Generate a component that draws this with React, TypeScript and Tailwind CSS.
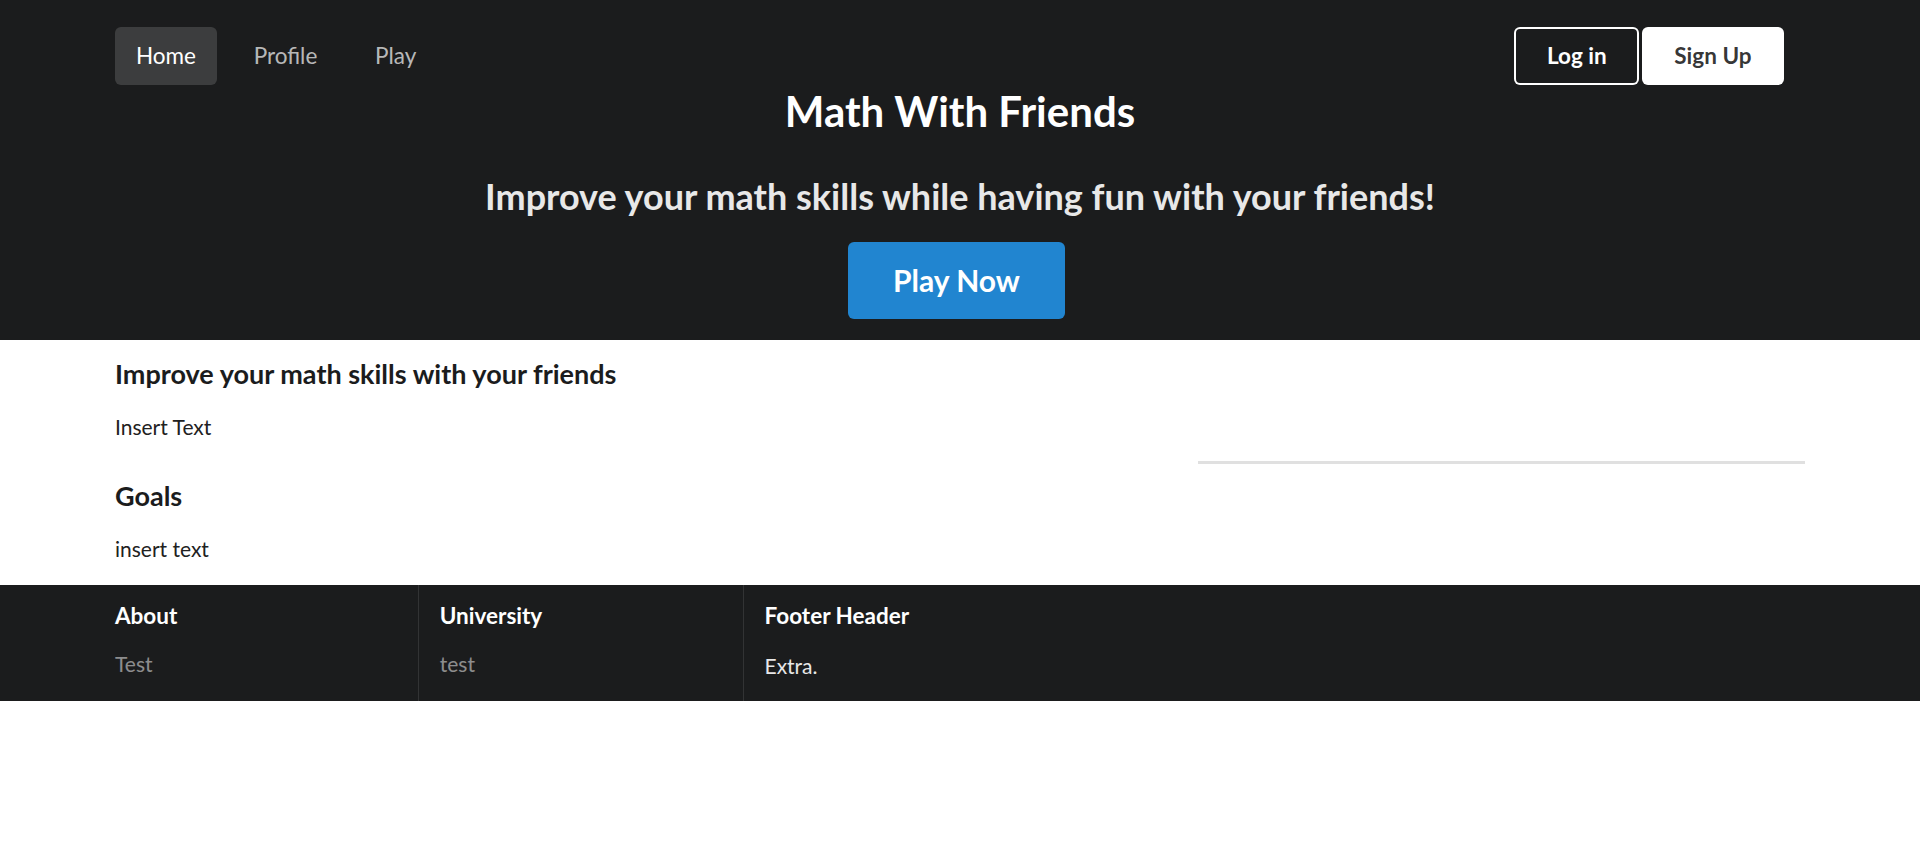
export default function App() {
  const font = "font-['Lato','Helvetica_Neue',Arial,sans-serif]";
  return (
    <div className={`min-h-[849px] bg-white ${font} text-[21px] text-[#212121]`}>
      <header className="bg-[#1b1c1d] pt-[27px] pb-[20.7px] text-center">
        <div className="mx-auto flex w-[1690px] items-start">
          <nav className="flex items-start">
            <a className="rounded-[6px] bg-white/15 px-[20.9px] py-[17.7px] text-[22.5px] leading-none text-white">
              Home
            </a>
            <a className="ml-[16px] rounded-[6px] px-[20.9px] py-[17.7px] text-[22.5px] leading-none text-white/70">
              Profile
            </a>
            <a className="ml-[16px] rounded-[6px] px-[20.9px] py-[17.7px] text-[22.5px] leading-none text-white/70">
              Play
            </a>
          </nav>
          <div className="ml-auto flex items-start pr-[21px]">
            <a className="rounded-[6px] bg-[#1b1c1d] px-[32.5px] py-[17.5px] text-[22.5px] leading-none font-bold text-white shadow-[inset_0_0_0_2px_#ffffff]">
              Log in
            </a>
            <a className="ml-[2.7px] rounded-[6px] bg-white px-[32.5px] py-[17.5px] text-[22.5px] leading-none font-bold text-black/80">
              Sign Up
            </a>
          </div>
        </div>
        <h1 className="h-[52px] text-[42px] leading-[52px] font-bold text-white">Math With Friends</h1>
        <h2 className="mt-[36.4px] text-[36px] leading-[46px] font-bold text-[#e8e8e8]">
          Improve your math skills while having fun with your friends!
        </h2>
        <a className="mt-[22.6px] mr-[7px] inline-block rounded-[6px] bg-[#2185d0] px-[45px] py-[23.5px] text-[30px] leading-none font-bold text-white">
          Play Now
        </a>
      </header>

      <main className="mx-auto w-[1690px] pt-[17.5px] pb-[20.8px]">
        <div className="-mx-[21px] flex">
          <div className="w-[866px] px-[21px]">
            <h3 className="text-[27px] leading-[34.7px] font-bold text-[#1b1c1d]">
              Improve your math skills with your friends
            </h3>
            <p className="mt-[20.7px] leading-[30px]">Insert Text</p>
            <h3 className="mt-[37px] text-[27px] leading-[34.7px] font-bold text-[#1b1c1d]">Goals</h3>
            <p className="mt-[20px] leading-[30px]">insert text</p>
          </div>
          <div className="ml-auto flex w-[649.5px] items-center px-[21px] pt-[3px]">
            <div className="h-[3px] w-full bg-[#e0e0e0]" />
          </div>
        </div>
      </main>

      <footer className="bg-[#1b1c1d]">
        <div className="mx-auto w-[1690px]">
          <div className="-mx-[21px] flex">
            <div className="w-[324.75px] px-[21px] pt-[17.5px] pb-[22px]">
              <h4 className="text-[22.5px] leading-[28.9px] font-bold text-white">About</h4>
              <p className="mt-[17.5px] leading-[30px] text-white/50">Test</p>
            </div>
            <div className="w-[324.75px] px-[21px] pt-[17.5px] pb-[22px] shadow-[-1px_0_0_0_rgba(255,255,255,0.1)]">
              <h4 className="text-[22.5px] leading-[28.9px] font-bold text-white">University</h4>
              <p className="mt-[17.5px] leading-[30px] text-white/50">test</p>
            </div>
            <div className="w-[324.75px] px-[21px] pt-[17.5px] pb-[20px] shadow-[-1px_0_0_0_rgba(255,255,255,0.1)]">
              <h4 className="text-[22.5px] leading-[28.9px] font-bold text-white">Footer Header</h4>
              <p className="mt-[19.5px] leading-[30px] text-white/90">Extra.</p>
            </div>
          </div>
        </div>
      </footer>
    </div>
  );
}
